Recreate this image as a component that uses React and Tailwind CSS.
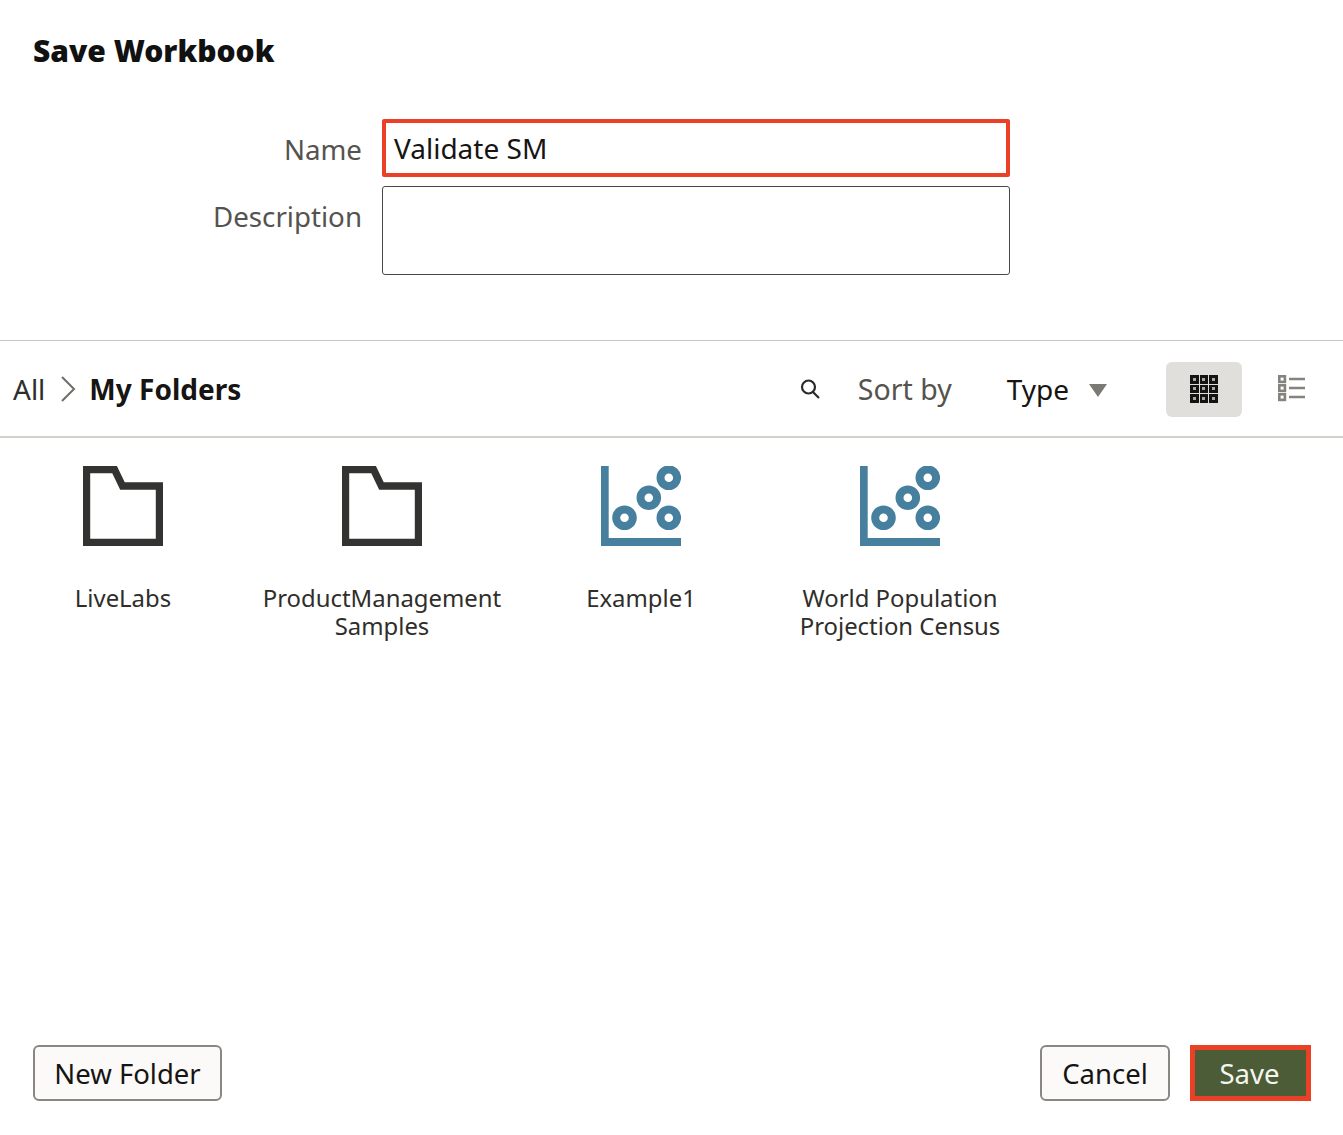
import React from 'react';

const items = [
  { type: 'folder', lines: ['LiveLabs'] },
  { type: 'folder', lines: ['ProductManagement', 'Samples'] },
  { type: 'workbook', lines: ['Example1'] },
  { type: 'workbook', lines: ['World Population', 'Projection Census'] },
];

function FolderIcon() {
  return (
    <svg width="80" height="80" viewBox="0 0 80 80" className="block">
      <path d="M3.5 3.5H31.5L39.5 20H76.5V76.5H3.5Z" fill="none" stroke="#333331" strokeWidth="7.4" strokeLinejoin="miter" />
    </svg>
  );
}

function WorkbookIcon() {
  return (
    <svg width="80" height="80" viewBox="0 0 80 80" className="block">
      <path d="M0 0H7.7V72H80V80H0Z" fill="#47809f" />
      <g fill="none" stroke="#47809f" strokeWidth="8">
        <circle cx="23.5" cy="51.7" r="8.3" />
        <circle cx="47.8" cy="31.7" r="8.3" />
        <circle cx="67.8" cy="11.7" r="8.3" />
        <circle cx="67.8" cy="51.7" r="8.3" />
      </g>
    </svg>
  );
}

function SearchIcon() {
  return (
    <svg width="22" height="22" viewBox="0 0 22 22" fill="none" stroke="#2b2a28" strokeWidth="2.2">
      <circle cx="9.5" cy="9" r="6.5" />
      <path d="M14 14L20 20" />
    </svg>
  );
}

function ChevronIcon() {
  return (
    <svg width="16" height="26" viewBox="0 0 16 26" fill="none" stroke="#6f6d68" strokeWidth="2" className="ml-[15px] mr-[14px]">
      <path d="M2 1L14 13L2 25" />
    </svg>
  );
}

function GridIcon() {
  const cells = [0, 1, 2, 3, 4, 5, 6, 7, 8];
  return (
    <div className="grid grid-cols-3 gap-[1px] w-[28px] h-[28px]">
      {cells.map(c => (
        <div key={c} className="bg-[#141311] flex items-center justify-center">
          <div className="w-[3px] h-[3px] bg-[#a8a8a4]" />
        </div>
      ))}
    </div>
  );
}

function ListIcon() {
  return (
    <svg width="28" height="27" viewBox="0 0 28 27" fill="none" stroke="#85837e" strokeWidth="2.6">
      <rect x="1.3" y="1.3" width="5.6" height="5.6" />
      <rect x="1.3" y="10.3" width="5.6" height="5.6" />
      <rect x="1.3" y="19.3" width="5.6" height="5.6" />
      <path d="M11 4H27M11 13H27M11 22H27" />
    </svg>
  );
}

export default function App() {
  return (
    <div className="w-[1343px] h-[1135px] bg-white flex flex-col font-['Noto_Sans',sans-serif] text-[#161513] overflow-hidden">
      <h1 className="pl-[33px] pt-[30px] h-[119px] text-[30px] leading-[42px] font-black text-[#111]">Save Workbook</h1>

      <div className="flex flex-col gap-[9px] h-[221px]">
        <div className="flex items-center gap-[20px] h-[58px]">
          <label className="w-[362px] text-right text-[27.7px] leading-[38px] text-[#55534e] translate-y-[1px]">Name</label>
          <div className="w-[628px] h-[58px] border-[4px] border-[#ea4126] rounded-[2px] pl-[8px] flex items-center text-[28px] text-[#161513]">Validate SM</div>
        </div>
        <div className="flex gap-[20px]">
          <label className="w-[362px] text-right text-[27.7px] leading-[38px] pt-[11px] text-[#55534e]">Description</label>
          <div className="w-[628px] h-[89px] border-[1.5px] border-[#4a4843] rounded-[3px]" />
        </div>
      </div>

      <div className="h-[98px] border-t-[1px] border-b-[2px] border-t-[#c9c6c1] border-b-[#d3d1cb] flex items-center pl-[13px] text-[28px]">
        <span className="text-[#2f2e2b]">All</span>
        <ChevronIcon />
        <span className="font-bold text-[#161513] -ml-px">My Folders</span>
        <div className="ml-auto flex items-center">
          <SearchIcon />
          <span className="ml-[37px] text-[28.5px] text-[#55534e] translate-y-[1px]">Sort by</span>
          <span className="ml-[55px] text-[#161513]">Type</span>
          <div className="ml-[20px] mt-[3px] w-0 h-0 border-x-[9px] border-x-transparent border-t-[13px] border-t-[#7b7973]" />
          <div className="ml-[59px] mt-[1px] w-[76px] h-[55px] bg-[#e0dfdb] rounded-[6px] flex items-center justify-center">
            <GridIcon />
          </div>
          <div className="ml-[36px] mr-[37px]">
            <ListIcon />
          </div>
        </div>
      </div>

      <div className="flex-1 flex pt-[28px]">
        {items.map((item, idx) => (
          <div key={idx} className={`w-[259px] flex flex-col items-center ${idx === 0 ? 'ml-[-6.5px]' : ''}`}>
            {item.type === 'folder' ? <FolderIcon /> : <WorkbookIcon />}
            <div className="mt-[38px] text-center text-[23.9px] leading-[28px] text-[#2f2e2b]">
              {item.lines.map((line, i) => <React.Fragment key={line}>{i > 0 && <br />}{line}</React.Fragment>)}
            </div>
          </div>
        ))}
      </div>

      <div className="flex items-center pl-[33px] pr-[32px] pb-[34px] text-[27.5px]">
        <button className="h-[56px] w-[189px] pt-px border-2 border-[#8a8782] rounded-[6px] bg-[#fbfaf9] text-[#161513]">New Folder</button>
        <button className="ml-auto h-[56px] w-[130px] pt-px border-2 border-[#8a8782] rounded-[6px] bg-[#fbfaf9] text-[#161513]">Cancel</button>
        <button className="ml-[20px] h-[56px] w-[121px] pt-px pr-[2px] border-[5px] border-[#ea4126] bg-[#4b5c37] text-[#f5f5ef]">Save</button>
      </div>
    </div>
  );
}
